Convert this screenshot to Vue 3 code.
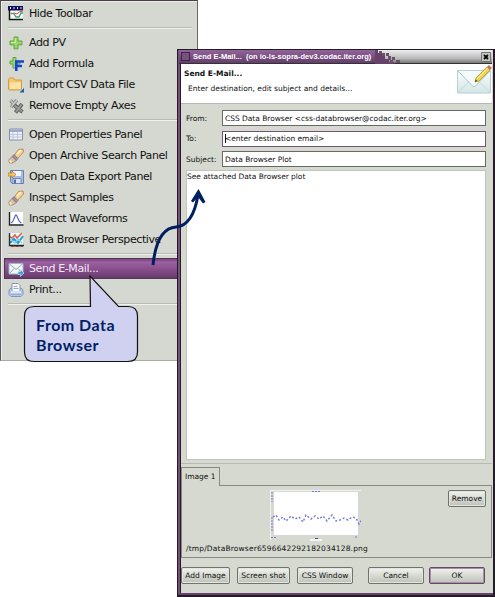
<script setup>
const groups = [
  [{ icon: 'toolbar', text: 'Hide Toolbar' }],
  [
    { icon: 'add', text: 'Add PV' },
    { icon: 'formula', text: 'Add Formula' },
    { icon: 'folder', text: 'Import CSV Data File' },
    { icon: 'remove', text: 'Remove Empty Axes' },
  ],
  [
    { icon: 'table', text: 'Open Properties Panel' },
    { icon: 'torch', text: 'Open Archive Search Panel' },
    { icon: 'save', text: 'Open Data Export Panel' },
    { icon: 'torch', text: 'Inspect Samples' },
    { icon: 'wave', text: 'Inspect Waveforms' },
    { icon: 'chart', text: 'Data Browser Perspective' },
  ],
  [
    { icon: 'mail', text: 'Send E-Mail...', selected: true },
    { icon: 'print', text: 'Print...' },
  ],
]
const fields = [
  { label: 'From:', value: 'CSS Data Browser <css-databrowser@codac.iter.org>' },
  { label: 'To:', value: '<enter destination email>', focus: true },
  { label: 'Subject:', value: 'Data Browser Plot' },
]
</script>

<template>
  <div class="desktop">
    <div class="menu">
      <div v-for="(group, g) in groups" :key="g" class="group">
        <div v-for="item in group" :key="item.text" class="item" :class="{ selected: item.selected }">
          <svg class="icon" viewBox="0 0 16 16">
            <g v-if="item.icon === 'toolbar'">
              <path d="M1 1h14v13H1z" fill="#fff" />
              <path d="M0 0h15v4.500H0z" fill="#10105c" />
              <path d="M2.500 1v2M6 1v2M9.500 1v2M13 1v2" stroke="#dfe2f5" stroke-width="1" />
              <path d="M1.500 4v9.500H15" fill="none" stroke="#161616" stroke-width="1.500" />
              <path d="M3 8l3-1 3 1 2-2 4-1" fill="none" stroke="#d44" />
              <path d="M3 7l3 1 2 3 3 0 2-4 2 0" fill="none" stroke="#2ca56a" stroke-width="1.300" />
            </g>
            <g v-else-if="item.icon === 'add'">
              <path d="M6 2h4v4h4v3.800h-4v4H6v-4H2V6h4z" fill="#9bd565" stroke="#5ea345" />
              <path d="M7.300 3.500v4H3" fill="none" stroke="#cdf09f" stroke-width="1.200" />
            </g>
            <g v-else-if="item.icon === 'formula'">
              <path d="M5 1.500h3v3.500H12V8H8v4H5V8H2V5h3z" fill="#9bd565" stroke="#5ea345" />
              <path d="M8.300 15V5.500H16M8.500 10H14" fill="none" stroke="#1745d3" stroke-width="2.600" />
            </g>
            <g v-else-if="item.icon === 'folder'">
              <path d="M.5 12V2.500L1.500 1h4L7 3h6.500V12l-1 1H1.500z" fill="#f6c66c" stroke="#d09a50" />
              <path d="M1.500 5.500h11.500v6.500h-11z" fill="#ffe3a6" />
              <path d="M16 11v4.500h-4.500z" fill="#1d5db5" />
            </g>
            <g v-else-if="item.icon === 'remove'">
              <path d="M2.500 2.500l7 7M9 2L3 9.500" stroke="#858683" stroke-width="3.400" />
              <path d="M2.500 2.500l7 7M9 2L3 9.500" stroke="#c8c9c6" stroke-width="1.700" />
              <path d="M6 7l8.500 7M14 6L7.500 14.500" stroke="#62635f" stroke-width="3.800" />
              <path d="M6.500 7.500l7.500 6M13.500 6.500L8 14" stroke="#999a96" stroke-width="2" />
            </g>
            <g v-else-if="item.icon === 'table'">
              <path d="M1.500 2h13v11h-13z" fill="#eef1f7" stroke="#8490ad" />
              <path d="M2 2.500h12V5H2z" fill="#9aa9cc" />
              <path d="M2 7.500h12M2 10h12M5 4.500v8M9.500 4.500v8" stroke="#b7bfd2" stroke-width=".8" />
            </g>
            <g v-else-if="item.icon === 'torch'">
              <path d="M6 7.500L10.500 1.500 15 1l.5 3L9.500 10.500z" fill="#f9d391" stroke="#c28a50" />
              <path d="M4 8.500l4.500 4L4.500 15H1.500L.8 12z" fill="#dfc3a0" stroke="#a58b75" />
              <path d="M6 6.500l4 4-1.800 2-4-4z" fill="#a295a0" stroke="#767490" stroke-width=".8" />
              <path d="M1.500 12.500l2 2M9 6l4-4" stroke="#fff3c8" stroke-width="1.500" />
            </g>
            <g v-else-if="item.icon === 'save'">
              <path d="M2.500 1.500h13v13H4l-1.500-2z" fill="#a9bde0" stroke="#6883b5" />
              <path d="M5 2h8v5H5z" fill="#f4f7fc" />
              <path d="M5 9.500h8v5H5z" fill="#dbe3f2" stroke="#617bae" stroke-width=".8" />
              <path d="M6 10.500h2v4H6z" fill="#5471a6" />
              <path d="M0 4h4V2l4 3.500L4 9V7H0z" fill="#f6c558" stroke="#aa792d" stroke-width=".7" />
            </g>
            <g v-else-if="item.icon === 'wave'">
              <path d="M1 1h14v14H1z" fill="#fff" />
              <path d="M3 12c3-1 3.500-8 5-8s2 7 5.500 8" fill="none" stroke="#5664d8" stroke-width="1.300" />
              <path d="M1.500 1v13H15.500" fill="none" stroke="#222" stroke-width="1.400" />
            </g>
            <g v-else-if="item.icon === 'chart'">
              <path d="M1 1h14v12H1z" fill="#eaf9fc" />
              <path d="M1 4l3 2 3-3 2 3 5-5" fill="none" stroke="#e35b43" stroke-width="1.500" />
              <path d="M2 11l4-4 4 4 5-7" fill="none" stroke="#2598ca" stroke-width="2" />
              <path d="M2 7l5 4 3-4 4 4" fill="none" stroke="#80d4e2" stroke-width="1.300" />
              <path d="M1.500 1v12.500H16M4 13v2M9 13v2M14 13v2" fill="none" stroke="#25272c" stroke-width="1.300" />
              <path d="M5 14.500h3M10 14.500h3" stroke="#d34e34" />
            </g>
            <g v-else-if="item.icon === 'mail'">
              <path d="M1 2.500h14v10.500H1z" fill="#f1f7f8" stroke="#a0b9c0" />
              <path d="M1.500 3L8 8.500l6.500-5.500M1.500 12.500L6 7.500M14.500 12.500L10 7.500" fill="none" stroke="#91abb4" />
              <path d="M10 10.500h2.500V8.500l3.500 3.500-3.500 3.500v-2H10z" fill="#4b9dd2" stroke="#d2ecf7" stroke-width=".6" />
            </g>
            <g v-else>
              <path d="M1 8l2-2h10l2 2v4.500l-2 2H3l-2-2z" fill="#b9c9e8" stroke="#8195be" />
              <path d="M4 1.500h6l2 2v6H4z" fill="#fafcff" stroke="#8795b4" />
              <path d="M5.500 4.500h4M5.500 6.500h5M3 12.500h10" stroke="#92a9d5" />
              <path d="M3 10h10" stroke="#edf3ff" stroke-width="1.500" />
            </g>
          </svg>
          <span>{{ item.text }}</span>
        </div>
        <div class="rule"></div>
      </div>
    </div>

    <div class="dialog">
      <div class="titlebar">
        <div class="caption">
          <i class="winicon"></i>
          <span>Send E-Mail...&nbsp; (on io-ls-sopra-dev3.codac.iter.org)</span>
        </div>
        <svg class="pixels" width="30" height="14" viewBox="0 0 30 14">
          <path d="M0 0h3v3h4v3h3v3h4v3h5v2H0z" fill="#66416a" />
          <path d="M4 1h3v3H4zM7 3h3v3H7zM11 3h3v3h-3zM13 6h3v4h-3zM17 7h3v3h-3zM15 10h3v3h-3zM21 10h4v3h-4z" fill="#66536a" />
        </svg>
        <svg class="close" width="10" height="10" viewBox="0 0 10 10">
          <path d="M.5.5h9v9h-9z" fill="#c4c4c4" stroke="#777" />
          <path d="M3 3l4 4M7 3L3 7" stroke="#080808" stroke-width="1.800" />
        </svg>
      </div>
      <div class="header">
        <div>
          <div class="heading">Send E-Mail...</div>
          <div class="hint">Enter destination, edit subject and details...</div>
        </div>
        <svg class="letter" width="36" height="32" viewBox="0 0 36 32">
          <defs>
            <linearGradient id="paper" x2="0" y2="1"><stop stop-color="#f9fcfc" /><stop offset="1" stop-color="#d4e6e8" /></linearGradient>
          </defs>
          <path d="M1.500 5.500h33v22.500h-33z" fill="url(#paper)" stroke="#b8d0d4" />
          <path d="M2 27.500l12-12M34 27.500L22 15.500" stroke="#c2d8db" fill="none" />
          <path d="M2 6l15 15.500h2L34 6" fill="#f5fafa" stroke="#a8c5ca" />
          <path d="M19 17l1-4L31 2l3 3-11 11z" fill="#f4d44d" stroke="#b39539" stroke-width=".8" />
          <path d="M21 14L32 3" stroke="#fff29a" />
          <path d="M31 2l2-2 3 3-2 2z" fill="#cf6960" />
          <path d="M19 17l.7-2.500 1.800 1.600z" fill="#554434" />
        </svg>
      </div>
      <div class="body">
        <div class="form">
          <div v-for="f in fields" :key="f.label" class="field">
            <label>{{ f.label }}</label>
            <div class="input" :class="{ focus: f.focus }"><i v-if="f.focus" class="caret"></i><span>{{ f.value }}</span></div>
          </div>
        </div>
        <div class="message">See attached Data Browser plot</div>
        <div class="tabs"><div class="tab">Image 1</div></div>
        <div class="panel">
          <div class="panelrow">
            <svg class="plot" width="91" height="52" viewBox="0 0 91 52">
              <path d="M0 0h91v1H1v49H0z" fill="#f1f2ee" />
              <path d="M4 2h84v43H4z" fill="#fff" />
              <path d="M2 2v10M2 27v15" stroke="#777bd0" stroke-dasharray="2 1" />
              <path d="M42 1.500h9M1 47.500h5M85 47h3" stroke="#7378df" stroke-width="1.200" stroke-dasharray="2 1" />
              <path d="M40 50h12" stroke="#fff" stroke-width="1.500" />
              <path d="M45 48.500h3" stroke="#4545b0" />
              <path d="M3 27l3-2 3 5 4-3 3 4 5-5 4 3 4-2 4 5 3-7 5 4 4-3 4 3 4-3 4 5 5-6 4 6 4-1 4-2 4 2 4-3 4 1 3 6 5-7" fill="none" stroke="#777bdd" stroke-width="1.500" stroke-dasharray="2 2" />
            </svg>
            <button class="removebtn">Remove</button>
          </div>
          <div class="path">/tmp/DataBrowser6596642292182034128.png</div>
        </div>
        <div class="buttons">
          <button class="b-add">Add Image</button>
          <button class="b-shot">Screen shot</button>
          <button class="b-css">CSS Window</button>
          <button class="b-cancel">Cancel</button>
          <button class="b-ok">OK</button>
        </div>
      </div>
    </div>

    <svg class="overlay" width="495" height="597" viewBox="0 0 495 597">
      <path d="M153 265C155 246 161 228 176 227C189 226 195 213 198 195" fill="none" stroke="#001f60" stroke-width="3" />
      <path d="M198.500 189L205.500 202L203 203.500L198 197L193 202.500L191 201Z" fill="#001f60" />
      <path d="M34 306.500H90.500L90 276L118.500 306.500H128Q137.500 306.500 137.500 316V352Q137.500 361.500 128 361.500H34Q24.500 361.500 24.500 352V316Q24.500 306.500 34 306.500Z" fill="#d0d0f0" stroke="#111" stroke-width="1.200" />
    </svg>
    <div class="callout">From Data<br />Browser</div>
  </div>
</template>

<style>
body { background: #fff; overflow: hidden; }
</style>

<style scoped>
* { box-sizing: border-box; }
.desktop { position: relative; width: 495px; height: 597px; overflow: hidden; background: #fff; font-family: "DejaVu Sans", sans-serif; color: #111; }
.menu { width: 198px; height: 361px; padding: 2px 2px 0 3px; background: #d5d8d0; border: 1px solid #6a666a; border-left-color: #5b535b; border-top-color: #483c48; border-bottom-color: #a7a9a4; box-shadow: inset 1px 1px 0 #eceee9; }
.item { display: flex; align-items: center; gap: 5px; height: 21px; padding-left: 4px; font-size: 11px; letter-spacing: -.4px; white-space: nowrap; }
.icon { width: 16px; height: 16px; flex: none; }
.selected { color: #f4eaf5; background: linear-gradient(#693d70, #9b609f 20%, #8a508f 50%, #633967); box-shadow: inset 0 0 0 1px #553459; }
.rule { height: 8px; margin: 0 3px 0 4px; border-top: 3px solid transparent; background: linear-gradient(#b9bcb4 1px, #eff1ec 1px, #eff1ec 2px, transparent 2px) padding-box; }
.dialog { position: absolute; left: 177px; top: 49px; width: 318px; height: 548px; border: solid #241b28; border-width: 1px 2px 2px 1px; padding: 0 1px 3px 3px; background: linear-gradient(90deg, #765079 0 2px, #251c28 2px 3px, #d6d9d0 3px); display: flex; flex-direction: column; box-shadow: inset 0 -2px #68406c; font-size: 7.5px; }
.titlebar { display: flex; flex: none; height: 14px; margin-left: -2px; background: linear-gradient(#ededed, #bababa 65%, #777); border-bottom: 1px solid #333; }
.caption { display: flex; align-items: center; gap: 3px; width: 196px; padding-left: 2px; background: linear-gradient(#92649a, #633e6b); color: #fff; font: bold 7.5px "Liberation Sans", sans-serif; white-space: nowrap; }
.winicon { width: 9px; height: 9px; border: 1px solid #3e2545; background: #79517f; }
.close { margin: 2px 1px 0 auto; }
.header { display: flex; flex: none; justify-content: space-between; height: 39px; padding: 0 0 0 3px; background: #fff; white-space: nowrap; }
.heading { margin-top: 4px; font-weight: bold; line-height: 12px; }
.hint { margin: 3px 0 0 4px; line-height: 11px; }
.letter { margin-top: 1px; }
.body { flex: 1; display: flex; flex-direction: column; border-top: 1px solid #b7bab2; background: #d6d9d0; }
.form { display: flex; flex-direction: column; gap: 4px; padding: 6px 6px 0 5px; }
.field { display: flex; align-items: center; height: 16.500px; }
.field label { width: 36px; }
.input { position: relative; flex: 1; display: flex; align-items: center; height: 16px; padding-left: 2px; border: 1px solid #656a65; background: #fff; white-space: nowrap; letter-spacing: -.03px; }
.focus { border-color: #765278; }
.caret { position: absolute; left: 2px; width: 1px; height: 9px; background: #111; }
.message { flex: none; height: 290px; margin: 2px 6px 0 5px; padding: 1px 0; background: #fff; border: 1px solid #c0c4bd; line-height: 9px; letter-spacing: -.04px; }
.tabs { display: flex; flex: none; height: 22px; margin-top: 3px; border-top: 1px solid #b6bab0; padding-top: 3px; }
.tab { width: 39px; padding: 4px 0 0 3px; line-height: 10px; border: 1px solid #868a82; border-bottom: 0; white-space: nowrap; }
.panel { flex: none; height: 73px; border: 1px solid #868a82; border-width: 0 1px 1px; padding: 5px 5px 0 4px; background: linear-gradient(#868a82, #868a82) 37px 0 / 300px 1px no-repeat; }
.panelrow { display: flex; justify-content: space-between; padding-left: 84px; height: 54px; }
.path { line-height: 10px; letter-spacing: .16px; }
.buttons { display: flex; padding-top: 9px; }
button { height: 17px; padding: 0; border: 1px solid #6f736c; border-radius: 2px; background: linear-gradient(#f2f3ef, #d4d7cf 55%, #bec2b9); box-shadow: inset 0 0 0 1px #e2e5de; color: #111; font: 7.5px "DejaVu Sans", sans-serif; white-space: nowrap; }
.removebtn { width: 38px; }
.b-add { width: 49px; margin-right: 7px; }
.b-shot { width: 53px; margin-right: 7px; }
.b-css { width: 56px; margin-right: 15px; }
.b-cancel { width: 56px; margin-right: 5px; }
.b-ok { width: 56px; border-color: #654a68; box-shadow: inset 0 0 0 1px #a78da8; }
.overlay { position: absolute; left: 0; top: 0; }
.callout { position: absolute; left: 36px; top: 315px; color: #001f65; font: bold 16px/19.500px Lato, sans-serif; letter-spacing: .5px; white-space: nowrap; }
</style>
